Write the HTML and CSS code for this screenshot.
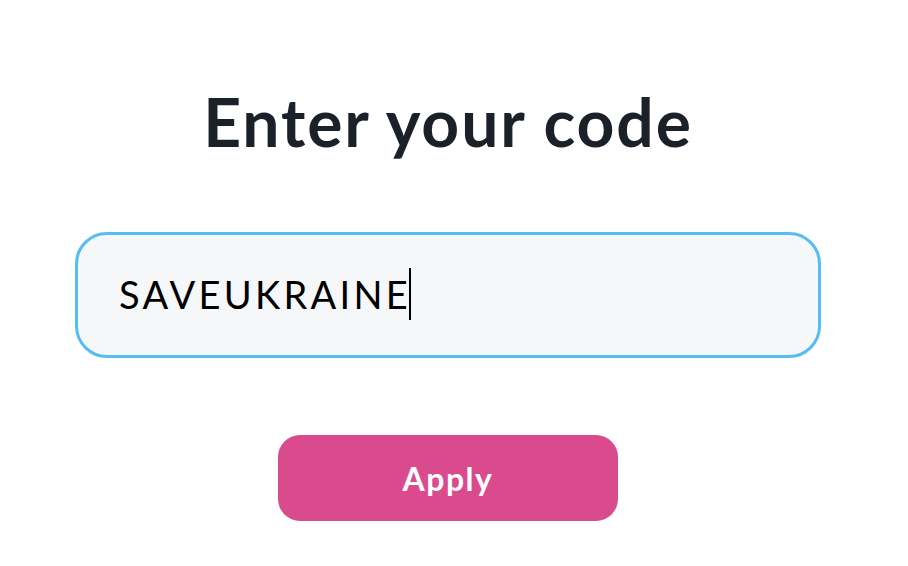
FILE: index.html
```html
<!DOCTYPE html>
<html>
<head>
<meta charset="utf-8">
<link rel="stylesheet" href="styles.css">
</head>
<body>
<main class="page">
  <h1 class="title">Enter your code</h1>
  <div class="field"><span class="value">SAVEUKRAINE</span><span class="caret"></span></div>
  <button class="apply">Apply</button>
</main>
</body>
</html>
```
FILE: styles.css
```css
html, body {
  margin: 0;
  padding: 0;
  background: #ffffff;
}
.page {
  width: 896px;
  display: flex;
  flex-direction: column;
  align-items: center;
  font-family: Lato, "Open Sans", sans-serif;
}
.title {
  margin: 82px 0 0;
  font-size: 66px;
  line-height: 80px;
  font-weight: 700;
  color: #1b2129;
  letter-spacing: 1.9px;
}
.field {
  box-sizing: border-box;
  margin-top: 70px;
  width: 746px;
  height: 126px;
  border: 3px solid #55bdf4;
  border-radius: 32px;
  background: #f6f7f9;
  display: flex;
  align-items: center;
  padding-left: 41px;
  padding-bottom: 2px;
}
.value {
  font-size: 38px;
  color: #000;
  font-weight: 400;
  letter-spacing: 3.3px;
  margin-right: -2px;
}
.caret {
  display: inline-block;
  width: 2px;
  height: 52px;
  background: #000;
  margin-left: 0;
}
.apply {
  margin-top: 77px;
  width: 340px;
  height: 86px;
  border: none;
  border-radius: 22px;
  background: #da4b8e;
  color: #fff;
  font-family: Lato, "Open Sans", sans-serif;
  font-size: 32px;
  font-weight: 700;
  letter-spacing: 1.5px;
  padding: 0;
}
```
